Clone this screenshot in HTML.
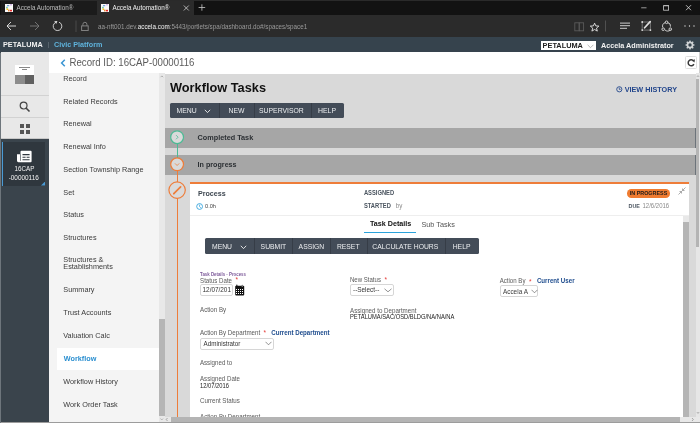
<!DOCTYPE html>
<html><head><meta charset="utf-8"><style>
html,body{margin:0;padding:0;width:700px;height:423px;overflow:hidden;background:#fff;font-family:"Liberation Sans",sans-serif}
#w{position:absolute;left:0;top:0;width:700px;height:423px;overflow:hidden;will-change:transform}
.t{position:absolute;line-height:1;white-space:nowrap}
</style></head><body>
<div id="w"><div style="position:absolute;left:0px;top:0px;width:700px;height:15px;background:#121212"></div>
<div style="position:absolute;left:0px;top:0px;width:700px;height:1px;background:#2a2a2a"></div>
<div style="position:absolute;left:1px;top:1.4px;width:96px;height:13.6px;background:#1b1b1b"></div>
<div style="position:absolute;left:97px;top:1.4px;width:97px;height:13.6px;background:#2b2b2b"></div>
<svg style="position:absolute;left:5px;top:3.8px" width="8" height="8"><rect width="8" height="8" fill="#fafafa"/><rect x="2" y="1.2" width="2.2" height="1" fill="#5b8fd6"/><rect x="5.2" y="0.4" width="1.6" height="0.9" fill="#b07ad6"/><rect x="1.3" y="2.8" width="1.3" height="1.6" fill="#48b89a"/><rect x="1.5" y="4.4" width="1.6" height="1.6" fill="#f3c21b"/><rect x="3" y="5.6" width="1.6" height="1.8" fill="#ee8a3a"/><rect x="5" y="5.8" width="2" height="1.6" fill="#e52b2b"/></svg>
<svg style="position:absolute;left:101px;top:3.8px" width="8" height="8"><rect width="8" height="8" fill="#fafafa"/><rect x="2" y="1.2" width="2.2" height="1" fill="#5b8fd6"/><rect x="5.2" y="0.4" width="1.6" height="0.9" fill="#b07ad6"/><rect x="1.3" y="2.8" width="1.3" height="1.6" fill="#48b89a"/><rect x="1.5" y="4.4" width="1.6" height="1.6" fill="#f3c21b"/><rect x="3" y="5.6" width="1.6" height="1.8" fill="#ee8a3a"/><rect x="5" y="5.8" width="2" height="1.6" fill="#e52b2b"/></svg>
<div class="t" style="left:16.5px;top:4.97px;font-size:6.3px;color:#bdbdbd;transform:scaleY(1.1);transform-origin:0 5.35px;">Accela Automation®</div>
<div class="t" style="left:112.5px;top:4.97px;font-size:6.3px;color:#f0f0f0;transform:scaleY(1.1);transform-origin:0 5.35px;">Accela Automation®</div>
<svg style="position:absolute;left:183px;top:5px" width="6.5" height="6"><path d="M0.8 0.5L5.8 5.5M5.8 0.5L0.8 5.5" stroke="#d0d0d0" stroke-width="0.8"/></svg>
<svg style="position:absolute;left:197.5px;top:4.2px" width="8" height="7"><path d="M3.9 0.3V6.7M0.6 3.5H7.2" stroke="#c8c8c8" stroke-width="0.8"/></svg>
<svg style="position:absolute;left:640px;top:3px" width="60" height="10"><path d="M1.2 4.8H6.5" stroke="#bbb" stroke-width="0.8"/><rect x="23.6" y="2.6" width="5" height="4.6" fill="none" stroke="#ccc" stroke-width="0.8"/><path d="M23.6 2.9H28.6" stroke="#ccc" stroke-width="0.6"/><path d="M46 2.2L51 7.2M51 2.2L46 7.2" stroke="#ddd" stroke-width="0.8"/></svg>
<div style="position:absolute;left:0px;top:15px;width:700px;height:22px;background:#2b2b2b"></div>
<svg style="position:absolute;left:0px;top:15px" width="100" height="22"><path d="M7 11H16M7 11L11 7M7 11L11 15" stroke="#e6e6e6" stroke-width="0.9" fill="none"/><path d="M39 11H30M39 11L35 7M39 11L35 15" stroke="#7a7a7a" stroke-width="0.9" fill="none"/><path d="M55.6 7.4A4.3 4.3 0 1 0 59 7.2" stroke="#dcdcdc" stroke-width="0.9" fill="none"/><path d="M54.2 6.2L57.4 6L56.2 9Z" fill="#dcdcdc"/><path d="M76 5.5V17" stroke="#4a4a4a" stroke-width="1"/><rect x="81.6" y="10.9" width="6.6" height="4.6" fill="none" stroke="#808080" stroke-width="1"/><path d="M82.9 10.9V9.3A2 2 0 0 1 86.9 9.3V10.9" stroke="#808080" stroke-width="1" fill="none"/></svg>
<div class="t" style="left:98px;top:23.57px;font-size:6.3px;color:#333;transform:scaleY(1.1);transform-origin:0 5.35px;"><span style="color:#9a9a9a">aa-nft001.dev.</span><span style="color:#f2f2f2">accela.com</span><span style="color:#9a9a9a">:5443/portlets/spa/dashboard.do#/spaces/space1</span></div>
<svg style="position:absolute;left:565px;top:15px" width="135" height="22"><rect x="9.8" y="7.8" width="4.4" height="8" fill="none" stroke="#5a5a5a" stroke-width="0.9"/><rect x="14.2" y="7.8" width="4.4" height="8" fill="none" stroke="#5a5a5a" stroke-width="0.9"/><path d="M29.6 8.2L30.8 10.9L33.9 11.1L31.5 13.1L32.3 16.1L29.6 14.5L26.9 16.1L27.7 13.1L25.3 11.1L28.4 10.9Z" fill="none" stroke="#e8e8e8" stroke-width="0.9" stroke-linejoin="round"/><path d="M40.5 5.5V16.5" stroke="#555" stroke-width="0.9"/><path d="M55 8.1H65M55 10.7H65M55 13.3H62" stroke="#e0e0e0" stroke-width="0.9"/><path d="M77.2 7V15.1H85.4V7H77.2" fill="none" stroke="#a8a8a8" stroke-width="0.6"/><circle cx="77.2" cy="7" r="0.9" fill="#e0e0e0"/><circle cx="77.2" cy="15.1" r="0.9" fill="#e0e0e0"/><circle cx="85.4" cy="15.1" r="0.9" fill="#e0e0e0"/><path d="M79.6 12.8L85.2 6.6" stroke="#e0e0e0" stroke-width="1.7" stroke-linecap="round"/><path d="M102.7 7.6A3.6 3.6 0 0 1 105.5 11.6M100 14.9A3.6 3.6 0 0 0 105.4 14.9M97.7 12.3A3.6 3.6 0 0 1 100.3 7.6" fill="none" stroke="#e0e0e0" stroke-width="0.9"/><circle cx="101.6" cy="7.3" r="1.3" fill="none" stroke="#e0e0e0" stroke-width="0.9"/><circle cx="98.2" cy="14.2" r="1.3" fill="none" stroke="#e0e0e0" stroke-width="0.9"/><circle cx="105.3" cy="14.2" r="1.3" fill="none" stroke="#e0e0e0" stroke-width="0.9"/><circle cx="120" cy="11" r="0.65" fill="#e0e0e0"/><circle cx="124.5" cy="11" r="0.65" fill="#e0e0e0"/><circle cx="129" cy="11" r="0.65" fill="#e0e0e0"/></svg>
<div style="position:absolute;left:0px;top:37px;width:700px;height:15.4px;background:#36434d"></div>
<div class="t" style="left:3px;top:41.15px;font-size:7.26px;color:#f2f2f2;transform:scaleY(1.1);transform-origin:0 6.17px;font-weight:bold;">PETALUMA</div>
<div style="position:absolute;left:48.2px;top:41.5px;width:0.8px;height:6px;background:#56636c"></div>
<div class="t" style="left:54px;top:41.21px;font-size:7.2px;color:#5fb3dc;transform:scaleY(1.1);transform-origin:0 6.12px;font-weight:bold;">Civic Platform</div>
<div style="position:absolute;left:541px;top:41px;width:55px;height:9px;background:#fff"></div>
<div class="t" style="left:542.6px;top:42.06px;font-size:7.37px;color:#222;transform:scaleY(1.1);transform-origin:0 6.26px;font-weight:bold;">PETALUMA</div>
<svg style="position:absolute;left:587px;top:43.5px" width="7" height="5"><path d="M0.6 0.8L3.5 3.7L6.4 0.8" stroke="#999" stroke-width="0.7" fill="none"/></svg>
<div class="t" style="left:601px;top:41.86px;font-size:7.25px;color:#f2f2f2;transform:scaleY(1.1);transform-origin:0 6.16px;font-weight:bold;">Accela Administrator</div>
<svg style="position:absolute;left:684.3px;top:38.9px" width="12" height="12"><path fill="#cfd2d4" fill-rule="evenodd" d="M9.40 5.18L10.56 5.39L10.56 6.61L9.40 6.82L8.98 7.83L9.66 8.79L8.79 9.66L7.83 8.98L6.82 9.40L6.61 10.56L5.39 10.56L5.18 9.40L4.17 8.98L3.21 9.66L2.34 8.79L3.02 7.83L2.60 6.82L1.44 6.61L1.44 5.39L2.60 5.18L3.02 4.17L2.34 3.21L3.21 2.34L4.17 3.02L5.18 2.60L5.39 1.44L6.61 1.44L6.82 2.60L7.83 3.02L8.79 2.34L9.66 3.21L8.98 4.17ZM7.7 6A1.7 1.7 0 1 0 4.3 6A1.7 1.7 0 1 0 7.7 6Z"/></svg>
<div style="position:absolute;left:0px;top:52.4px;width:49px;height:371px;background:#3a444c"></div>
<div style="position:absolute;left:1px;top:52.4px;width:48px;height:86.2px;background:#e8e8e8"></div>
<div style="position:absolute;left:1px;top:95px;width:48px;height:1px;background:#d2d2d2"></div>
<div style="position:absolute;left:1px;top:117.2px;width:48px;height:1px;background:#d2d2d2"></div>
<div style="position:absolute;left:1px;top:138.4px;width:48px;height:1px;background:#c8c8c8"></div>
<div style="position:absolute;left:15px;top:65px;width:19px;height:9.5px;background:#ffffff"></div>
<div style="position:absolute;left:15px;top:74.5px;width:9.5px;height:9.5px;background:#8c8c8c"></div>
<div style="position:absolute;left:24.5px;top:74.5px;width:9.5px;height:9.5px;background:#606060"></div>
<div style="position:absolute;left:19px;top:66.5px;width:11px;height:1px;background:#888"></div>
<div style="position:absolute;left:21.5px;top:69px;width:5.5px;height:1px;background:#888"></div>
<svg style="position:absolute;left:19px;top:101px" width="12" height="12"><circle cx="4.6" cy="4.6" r="3.4" fill="none" stroke="#444" stroke-width="1.2"/><path d="M7 7L10.5 10.5" stroke="#444" stroke-width="1.6"/></svg>
<div style="position:absolute;left:20px;top:124px;width:4px;height:4px;background:#555"></div>
<div style="position:absolute;left:25.5px;top:124px;width:4px;height:4px;background:#555"></div>
<div style="position:absolute;left:20px;top:129.5px;width:4px;height:4px;background:#555"></div>
<div style="position:absolute;left:25.5px;top:129.5px;width:4px;height:4px;background:#555"></div>
<div style="position:absolute;left:1.5px;top:141.5px;width:43.5px;height:44px;background:#2f373e"></div>
<div style="position:absolute;left:1.5px;top:141.5px;width:1.5px;height:44px;background:#4a9ad4"></div>
<svg style="position:absolute;left:40.5px;top:181px" width="4.5" height="4.5"><path d="M4.5 0V4.5H0Z" fill="#4a9ad4"/></svg>
<svg style="position:absolute;left:16px;top:150px" width="17" height="13"><path d="M5.5 0.8H14.6Q15.6 0.8 15.6 1.8V11.2Q15.6 12.2 14.6 12.2H2.4Q1 12.2 1 10.8V4.2H4.5V1.8Q4.5 0.8 5.5 0.8Z" fill="#fff"/><path d="M4.5 4.2V10.8" stroke="#2f373e" stroke-width="0.6"/><path d="M6.5 4.6H13.6M6.5 7.2H9.6M10.6 7.2H13.6M6.5 9.8H13.6" stroke="#2f373e" stroke-width="1.1"/></svg>
<div class="t" style="left:14.4px;top:166.07px;font-size:6.3px;color:#f2f2f2;transform:scaleY(1.12);transform-origin:0 5.35px;">16CAP</div>
<div class="t" style="left:8.7px;top:174.68px;font-size:6.4px;color:#f2f2f2;transform:scaleY(1.12);transform-origin:0 5.44px;">-00000116</div>
<div style="position:absolute;left:49px;top:52.4px;width:651px;height:20.8px;background:#ffffff"></div>
<svg style="position:absolute;left:60px;top:59px" width="6" height="8"><path d="M4.8 0.8L1.6 4L4.8 7.2" stroke="#3a95d3" stroke-width="1.5" fill="none"/></svg>
<div class="t" style="left:69.5px;top:58.41px;font-size:9.67px;color:#5a5a5a;transform:scaleY(1.1);transform-origin:0 8.22px;">Record ID: 16CAP-00000116</div>
<div style="position:absolute;left:685.4px;top:56.2px;width:12px;height:12.4px;background:#fff;border:1px solid #dedede;border-radius:1.5px;box-sizing:border-box"></div>
<svg style="position:absolute;left:686.5px;top:58px" width="9" height="9"><path d="M6.6 3.0A3 3 0 1 0 6.9 6.1" stroke="#3a3a3a" stroke-width="1.5" fill="none"/><path d="M5 2.4L7.9 1.3L7.5 4.4Z" fill="#3a3a3a"/></svg>
<div style="position:absolute;left:699px;top:52.4px;width:1px;height:21px;background:#cfcfcf"></div>
<div style="position:absolute;left:49px;top:73.2px;width:110px;height:350px;background:#f4f4f4"></div>
<div style="position:absolute;left:56.5px;top:347.5px;width:102.5px;height:22px;background:#ffffff"></div>
<div class="t" style="left:63.3px;top:74.82px;font-size:7.3px;color:#3a3a3a;transform:scaleY(1.1);transform-origin:0 6.21px;">Record</div>
<div class="t" style="left:63.3px;top:97.72px;font-size:7.3px;color:#3a3a3a;transform:scaleY(1.1);transform-origin:0 6.21px;">Related Records</div>
<div class="t" style="left:63.3px;top:120.32px;font-size:7.3px;color:#3a3a3a;transform:scaleY(1.1);transform-origin:0 6.21px;">Renewal</div>
<div class="t" style="left:63.3px;top:143.02px;font-size:7.3px;color:#3a3a3a;transform:scaleY(1.1);transform-origin:0 6.21px;">Renewal Info</div>
<div class="t" style="left:63.3px;top:165.72px;font-size:7.3px;color:#3a3a3a;transform:scaleY(1.1);transform-origin:0 6.21px;">Section Township Range</div>
<div class="t" style="left:63.3px;top:188.62px;font-size:7.3px;color:#3a3a3a;transform:scaleY(1.1);transform-origin:0 6.21px;">Set</div>
<div class="t" style="left:63.3px;top:210.82px;font-size:7.3px;color:#3a3a3a;transform:scaleY(1.1);transform-origin:0 6.21px;">Status</div>
<div class="t" style="left:63.3px;top:233.62px;font-size:7.3px;color:#3a3a3a;transform:scaleY(1.1);transform-origin:0 6.21px;">Structures</div>
<div class="t" style="left:63.3px;top:256.32px;font-size:7.3px;color:#3a3a3a;transform:scaleY(1.1);transform-origin:0 6.21px;">Structures &amp;</div>
<div class="t" style="left:63.3px;top:263.42px;font-size:7.3px;color:#3a3a3a;transform:scaleY(1.1);transform-origin:0 6.21px;">Establishments</div>
<div class="t" style="left:63.3px;top:286.22px;font-size:7.3px;color:#3a3a3a;transform:scaleY(1.1);transform-origin:0 6.21px;">Summary</div>
<div class="t" style="left:63.3px;top:308.82px;font-size:7.3px;color:#3a3a3a;transform:scaleY(1.1);transform-origin:0 6.21px;">Trust Accounts</div>
<div class="t" style="left:63.3px;top:331.82px;font-size:7.3px;color:#3a3a3a;transform:scaleY(1.1);transform-origin:0 6.21px;">Valuation Calc</div>
<div class="t" style="left:63.8px;top:354.86px;font-size:7.25px;color:#2b8fd0;transform:scaleY(1.1);transform-origin:0 6.16px;font-weight:bold;">Workflow</div>
<div class="t" style="left:63.3px;top:378.22px;font-size:7.3px;color:#3a3a3a;transform:scaleY(1.1);transform-origin:0 6.21px;">Workflow History</div>
<div class="t" style="left:63.3px;top:400.92px;font-size:7.3px;color:#3a3a3a;transform:scaleY(1.1);transform-origin:0 6.21px;">Work Order Task</div>
<div style="position:absolute;left:159px;top:73.2px;width:6px;height:343.8px;background:#e8e8e8"></div>
<svg style="position:absolute;left:159px;top:74px" width="6" height="5"><path d="M1.6 3.2L2.9 1.9L4.2 3.2" stroke="#888" stroke-width="0.6" fill="none"/></svg>
<div style="position:absolute;left:159px;top:318.6px;width:6px;height:97.9px;background:#b5b5b5"></div>
<div style="position:absolute;left:165px;top:73.6px;width:531px;height:343.4px;background:#d9d9d9"></div>
<div class="t" style="left:170px;top:81.79px;font-size:12.77px;color:#111;font-weight:bold;">Workflow Tasks</div>
<svg style="position:absolute;left:616px;top:86px" width="7" height="7"><circle cx="3.3" cy="3.3" r="2.6" fill="none" stroke="#24478c" stroke-width="0.9"/><path d="M3.3 1.6V3.4H4.6" stroke="#24478c" stroke-width="0.8" fill="none"/></svg>
<div class="t" style="left:624.7px;top:85.56px;font-size:7.25px;color:#24478c;transform:scaleY(1.1);transform-origin:0 6.16px;font-weight:bold;">VIEW HISTORY</div>
<div style="position:absolute;left:170px;top:102.7px;width:173.7px;height:15.2px;background:#434c58;border-radius:1.5px"></div>
<div style="position:absolute;left:219.4px;top:102.7px;width:0.8px;height:15.2px;background:#363d47"></div>
<div style="position:absolute;left:253.7px;top:102.7px;width:0.8px;height:15.2px;background:#363d47"></div>
<div style="position:absolute;left:310.6px;top:102.7px;width:0.8px;height:15.2px;background:#363d47"></div>
<div class="t" style="left:176.6px;top:107.80px;font-size:6.85px;color:#eceef0;transform:scaleY(1.1);transform-origin:0 5.82px;">MENU</div>
<svg style="position:absolute;left:204px;top:108.5px" width="7" height="5"><path d="M0.8 0.8L3.5 3.6L6.2 0.8" stroke="#f0f0f0" stroke-width="0.9" fill="none"/></svg>
<div class="t" style="left:228.6px;top:107.80px;font-size:6.85px;color:#eceef0;transform:scaleY(1.1);transform-origin:0 5.82px;">NEW</div>
<div class="t" style="left:259px;top:107.80px;font-size:6.85px;color:#eceef0;transform:scaleY(1.1);transform-origin:0 5.82px;">SUPERVISOR</div>
<div class="t" style="left:318px;top:107.76px;font-size:6.9px;color:#eceef0;transform:scaleY(1.1);transform-origin:0 5.87px;">HELP</div>
<div style="position:absolute;left:165px;top:128px;width:531px;height:19.6px;background:#a6a6a6"></div>
<div style="position:absolute;left:165px;top:155.1px;width:531px;height:19.5px;background:#a6a6a6"></div>
<div style="position:absolute;left:695px;top:128px;width:1px;height:19.6px;background:#6c737a"></div>
<div style="position:absolute;left:695px;top:155.1px;width:1px;height:19.5px;background:#6c737a"></div>
<div class="t" style="left:197.6px;top:134.45px;font-size:7.27px;color:#2b2f33;transform:scaleY(1.1);transform-origin:0 6.18px;font-weight:bold;">Completed Task</div>
<div class="t" style="left:197.6px;top:162.14px;font-size:7.16px;color:#2b2f33;transform:scaleY(1.1);transform-origin:0 6.09px;font-weight:bold;">In progress</div>
<div style="position:absolute;left:176.6px;top:144px;width:1.2px;height:14px;background:#4dbb95"></div>
<div style="position:absolute;left:176.6px;top:171px;width:1.2px;height:246px;background:#ee7d3a"></div>
<svg style="position:absolute;left:165px;top:125px" width="25" height="80"><circle cx="12.1" cy="12.2" r="6.4" fill="#dadada" stroke="#4dbb95" stroke-width="1.2"/><path d="M11 10.1L13.1 12.2L11 14.3" stroke="#4dbb95" stroke-width="0.8" fill="none"/><circle cx="12.1" cy="39.3" r="6.4" fill="#dadada" stroke="#ee7d3a" stroke-width="1.2"/><path d="M10 38.4L12.1 40.5L14.2 38.4" stroke="#ee7d3a" stroke-width="0.8" fill="none"/><circle cx="12.1" cy="65.1" r="8.2" fill="#dadada" stroke="#ee7d3a" stroke-width="1.2"/><path d="M8.8 68.6L15.6 61.8" stroke="#ee7d3a" stroke-width="1.7" stroke-linecap="round" fill="none"/><path d="M8.3 69.3L8.6 67.8L9.8 69Z" fill="#ee7d3a"/></svg>
<div style="position:absolute;left:190px;top:182.4px;width:499px;height:234.6px;background:#ffffff"></div>
<div style="position:absolute;left:190px;top:182.4px;width:499px;height:1.6px;background:#ee7d3a"></div>
<div class="t" style="left:197.9px;top:190.96px;font-size:7.14px;color:#3d4650;transform:scaleY(1.1);transform-origin:0 6.07px;font-weight:bold;">Process</div>
<svg style="position:absolute;left:196px;top:202.5px" width="7.5" height="7"><circle cx="3.6" cy="3.5" r="2.9" fill="none" stroke="#35a4dd" stroke-width="0.9"/><path d="M3.6 1.6V3.6L4.8 4.8" stroke="#35a4dd" stroke-width="0.8" fill="none"/></svg>
<div class="t" style="left:205px;top:203.62px;font-size:5.65px;color:#444;transform:scaleY(1.1);transform-origin:0 4.80px;">0.0h</div>
<div class="t" style="left:363.9px;top:191.49px;font-size:5.8px;color:#4b5560;transform:scaleY(1.1);transform-origin:0 4.93px;font-weight:bold;">ASSIGNED</div>
<div class="t" style="left:363.9px;top:203.69px;font-size:5.8px;color:#4b5560;transform:scaleY(1.1);transform-origin:0 4.93px;font-weight:bold;">STARTED</div>
<div class="t" style="left:395.7px;top:203.35px;font-size:6.2px;color:#8a8a8a;transform:scaleY(1.1);transform-origin:0 5.27px;">by</div>
<div style="position:absolute;left:627px;top:189.2px;width:43px;height:8.6px;background:#ef7b30;border-radius:4.3px"></div>
<div class="t" style="left:629.8px;top:191.23px;font-size:5.4px;color:#1a1a1a;transform:scaleY(1.15);transform-origin:0 4.59px;font-weight:bold;">IN PROGRESS</div>
<svg style="position:absolute;left:678px;top:187px" width="8" height="8"><path d="M7.5 0.5L4.5 3.5M4.5 1.5V3.5H6.5M0.5 7.5L3.5 4.5M1.5 4.5H3.5V6.5" stroke="#888" stroke-width="0.7" fill="none"/></svg>
<div class="t" style="left:628.5px;top:203.53px;font-size:5.4px;color:#4b5560;transform:scaleY(1.1);transform-origin:0 4.59px;font-weight:bold;">DUE</div>
<div class="t" style="left:642.5px;top:203.12px;font-size:6.0px;color:#8a8a8a;transform:scaleY(1.1);transform-origin:0 5.10px;">12/6/2016</div>
<div style="position:absolute;left:190px;top:215px;width:499px;height:0.8px;background:#eeeeee"></div>
<div class="t" style="left:370px;top:220.93px;font-size:7.17px;color:#111;transform:scaleY(1.1);transform-origin:0 6.09px;font-weight:bold;">Task Details</div>
<div class="t" style="left:421.4px;top:221.01px;font-size:7.31px;color:#555;transform:scaleY(1.1);transform-origin:0 6.21px;">Sub Tasks</div>
<div style="position:absolute;left:364px;top:231.7px;width:52.4px;height:1.4px;background:#2ba3db"></div>
<div style="position:absolute;left:683.4px;top:216.3px;width:5.6px;height:200.7px;background:#e8e8e8"></div>
<div style="position:absolute;left:683.4px;top:222px;width:5.6px;height:195px;background:#b5b5b5"></div>
<div style="position:absolute;left:205px;top:238.4px;width:273.6px;height:15.2px;background:#434c58;border-radius:1.5px"></div>
<div style="position:absolute;left:254.4px;top:238.4px;width:0.8px;height:15.2px;background:#363d47"></div>
<div style="position:absolute;left:292.4px;top:238.4px;width:0.8px;height:15.2px;background:#363d47"></div>
<div style="position:absolute;left:330.4px;top:238.4px;width:0.8px;height:15.2px;background:#363d47"></div>
<div style="position:absolute;left:366.6px;top:238.4px;width:0.8px;height:15.2px;background:#363d47"></div>
<div style="position:absolute;left:444.7px;top:238.4px;width:0.8px;height:15.2px;background:#363d47"></div>
<div class="t" style="left:212px;top:244.04px;font-size:6.8px;color:#eceef0;transform:scaleY(1.1);transform-origin:0 5.78px;">MENU</div>
<div class="t" style="left:260.6px;top:244.04px;font-size:6.8px;color:#eceef0;transform:scaleY(1.1);transform-origin:0 5.78px;">SUBMIT</div>
<div class="t" style="left:298.6px;top:244.04px;font-size:6.8px;color:#eceef0;transform:scaleY(1.1);transform-origin:0 5.78px;">ASSIGN</div>
<div class="t" style="left:336.9px;top:244.04px;font-size:6.8px;color:#eceef0;transform:scaleY(1.1);transform-origin:0 5.78px;">RESET</div>
<div class="t" style="left:372.3px;top:244.04px;font-size:6.8px;color:#eceef0;transform:scaleY(1.1);transform-origin:0 5.78px;">CALCULATE HOURS</div>
<div class="t" style="left:452.7px;top:244.04px;font-size:6.8px;color:#eceef0;transform:scaleY(1.1);transform-origin:0 5.78px;">HELP</div>
<svg style="position:absolute;left:240px;top:244.5px" width="7" height="5"><path d="M0.8 0.8L3.5 3.6L6.2 0.8" stroke="#f0f0f0" stroke-width="0.9" fill="none"/></svg>
<div class="t" style="left:200.1px;top:272.52px;font-size:4.35px;color:#7d5a9a;transform:scaleY(1.1);transform-origin:0 3.70px;font-weight:bold;">Task Details - Process</div>
<div class="t" style="left:200.1px;top:277.62px;font-size:6.12px;color:#5a5a5a;transform:scaleY(1.1);transform-origin:0 5.20px;">Status Date</div>
<div class="t" style="left:235.5px;top:277.20px;font-size:6.5px;color:#e53935;transform:scaleY(1.1);transform-origin:0 5.52px;">*</div>
<div style="position:absolute;left:200.4px;top:283.9px;width:32.7px;height:12.6px;background:#fff;border:1px solid #d6d6d6;border-radius:2px;box-sizing:border-box"></div>
<div class="t" style="left:202.5px;top:287.17px;font-size:6.41px;color:#333;transform:scaleY(1.1);transform-origin:0 5.45px;">12/07/201</div>
<svg style="position:absolute;left:235px;top:284px" width="10" height="12"><rect x="0.2" y="1.8" width="9" height="9.8" rx="1" fill="#111"/><rect x="1" y="5" width="1" height="1" fill="#fff"/><rect x="3" y="5" width="1" height="1" fill="#fff"/><rect x="5" y="5" width="1" height="1" fill="#fff"/><rect x="7" y="5" width="1" height="1" fill="#fff"/><rect x="1" y="7" width="1" height="1" fill="#fff"/><rect x="3" y="7" width="1" height="1" fill="#fff"/><rect x="5" y="7" width="1" height="1" fill="#fff"/><rect x="7" y="7" width="1" height="1" fill="#fff"/><rect x="1" y="9" width="1" height="1" fill="#fff"/><rect x="3" y="9" width="1" height="1" fill="#fff"/><rect x="5" y="9" width="1" height="1" fill="#fff"/><rect x="7" y="9" width="1" height="1" fill="#fff"/><rect x="1.3" y="0.6" width="1.1" height="2.4" rx="0.5" fill="#111"/><rect x="6.6" y="0.8" width="1.4" height="2.2" rx="0.6" fill="#777"/></svg>
<div class="t" style="left:350px;top:276.87px;font-size:6.06px;color:#5a5a5a;transform:scaleY(1.1);transform-origin:0 5.15px;">New Status</div>
<div class="t" style="left:384.5px;top:277.20px;font-size:6.5px;color:#e53935;transform:scaleY(1.1);transform-origin:0 5.52px;">*</div>
<div style="position:absolute;left:350px;top:283.6px;width:44.4px;height:12.8px;background:#fff;border:1px solid #d6d6d6;border-radius:2px;box-sizing:border-box"></div>
<div class="t" style="left:353px;top:286.77px;font-size:6.42px;color:#333;transform:scaleY(1.1);transform-origin:0 5.46px;">--Select--</div>
<svg style="position:absolute;left:384px;top:288px" width="8" height="5"><path d="M0.5 0.8L4 3.8L7.5 0.8" stroke="#666" stroke-width="0.7" fill="none"/></svg>
<div class="t" style="left:499.7px;top:278.24px;font-size:6.1px;color:#5a5a5a;transform:scaleY(1.1);transform-origin:0 5.18px;">Action By</div>
<div class="t" style="left:529px;top:278.50px;font-size:6.5px;color:#e53935;transform:scaleY(1.1);transform-origin:0 5.52px;">*</div>
<div class="t" style="left:536.9px;top:278.18px;font-size:6.17px;color:#1f4d8e;transform:scaleY(1.1);transform-origin:0 5.24px;font-weight:bold;">Current User</div>
<div style="position:absolute;left:499.7px;top:285.4px;width:38.7px;height:12.1px;background:#fff;border:1px solid #d6d6d6;border-radius:2px;box-sizing:border-box"></div>
<div class="t" style="left:502.9px;top:289.14px;font-size:6.45px;color:#3a3a3a;transform:scaleY(1.1);transform-origin:0 5.48px;">Accela A</div>
<svg style="position:absolute;left:530.5px;top:289px" width="7" height="5"><path d="M0.5 0.8L3.5 3.8L6.5 0.8" stroke="#666" stroke-width="0.7" fill="none"/></svg>
<div class="t" style="left:200.1px;top:307.39px;font-size:6.16px;color:#5a5a5a;transform:scaleY(1.1);transform-origin:0 5.24px;">Action By</div>
<div class="t" style="left:350px;top:308.06px;font-size:6.19px;color:#5a5a5a;transform:scaleY(1.1);transform-origin:0 5.26px;">Assigned to Department</div>
<div class="t" style="left:350px;top:315.01px;font-size:5.78px;color:#222;transform:scaleY(1.1);transform-origin:0 4.91px;">PETALUMA/SAC/OSD/BLDG/NA/NA/NA</div>
<div class="t" style="left:199.9px;top:329.84px;font-size:6.21px;color:#5a5a5a;transform:scaleY(1.1);transform-origin:0 5.28px;">Action By Department</div>
<div class="t" style="left:263.5px;top:330.30px;font-size:6.5px;color:#e53935;transform:scaleY(1.1);transform-origin:0 5.52px;">*</div>
<div class="t" style="left:271.2px;top:329.87px;font-size:6.18px;color:#1f4d8e;transform:scaleY(1.1);transform-origin:0 5.25px;font-weight:bold;">Current Department</div>
<div style="position:absolute;left:200.4px;top:338.3px;width:73.7px;height:12.1px;background:#fff;border:1px solid #d6d6d6;border-radius:2px;box-sizing:border-box"></div>
<div class="t" style="left:203.5px;top:341.38px;font-size:6.28px;color:#333;transform:scaleY(1.1);transform-origin:0 5.34px;">Administrator</div>
<svg style="position:absolute;left:265px;top:341px" width="7" height="5"><path d="M0.5 0.8L3.5 3.8L6.5 0.8" stroke="#666" stroke-width="0.7" fill="none"/></svg>
<div class="t" style="left:199.9px;top:359.75px;font-size:6.2px;color:#5a5a5a;transform:scaleY(1.1);transform-origin:0 5.27px;">Assigned to</div>
<div class="t" style="left:200px;top:375.99px;font-size:6.15px;color:#5a5a5a;transform:scaleY(1.1);transform-origin:0 5.23px;">Assigned Date</div>
<div class="t" style="left:200px;top:383.60px;font-size:5.79px;color:#222;transform:scaleY(1.1);transform-origin:0 4.92px;">12/07/2016</div>
<div class="t" style="left:200px;top:397.55px;font-size:6.2px;color:#5a5a5a;transform:scaleY(1.1);transform-origin:0 5.27px;">Current Status</div>
<div class="t" style="left:200px;top:413.75px;font-size:6.2px;color:#5a5a5a;transform:scaleY(1.1);transform-origin:0 5.27px;">Action By Department</div>
<div style="position:absolute;left:696px;top:73px;width:4px;height:344px;background:#e6e6e6"></div>
<div style="position:absolute;left:696px;top:79px;width:3px;height:168px;background:#b4b4b4"></div>
<svg style="position:absolute;left:696px;top:74px" width="4" height="4"><path d="M0.8 3L2 1.6L3.2 3" stroke="#777" stroke-width="0.5" fill="none"/></svg>
<svg style="position:absolute;left:696px;top:411px" width="4" height="4"><path d="M0.8 1L2 2.4L3.2 1" stroke="#777" stroke-width="0.5" fill="none"/></svg>
<div style="position:absolute;left:159px;top:417px;width:541px;height:6px;background:#e8e8e8"></div>
<div style="position:absolute;left:171px;top:417px;width:509px;height:4.7px;background:#b4b4b4"></div>
<svg style="position:absolute;left:159px;top:417px" width="12" height="5"><path d="M1.5 1.5L2.8 3L4.1 1.5" stroke="#888" stroke-width="0.5" fill="none"/><path d="M8.5 1L7.2 2.5L8.5 4" stroke="#777" stroke-width="0.6" fill="none"/></svg>
<svg style="position:absolute;left:690px;top:417px" width="6" height="5"><path d="M2 1L3.3 2.5L2 4" stroke="#777" stroke-width="0.6" fill="none"/></svg>
<div style="position:absolute;left:0px;top:422px;width:700px;height:1px;background:#9c9c9c"></div>
<div style="position:absolute;left:0px;top:53px;width:1px;height:370px;background:#6e767c"></div>
</div></body></html>
